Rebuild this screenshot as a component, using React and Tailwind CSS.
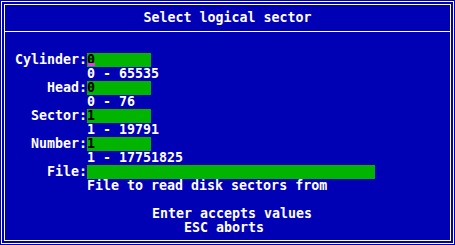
import React from "react";

const fields = [
  { label: "Cylinder:", value: "0", hint: "0 - 65535", width: "w-[64px]", cursor: true },
  { label: "Head:", value: "0", hint: "0 - 76", width: "w-[64px]" },
  { label: "Sector:", value: "1", hint: "1 - 19791", width: "w-[64px]" },
  { label: "Number:", value: "1", hint: "1 - 17751825", width: "w-[64px]" },
  { label: "File:", value: "", hint: "File to read disk sectors from", width: "w-[288px]" },
];

const Field = ({ label, value, hint, width, cursor }) => (
  <>
    <div className="flex h-[14px]">
      <div className="w-[82px] text-right">{label}</div>
      <div className={`${width} h-[14px] bg-[#00b400] text-black relative`}>
        {value}
        {cursor && <div className="absolute left-[1px] top-[10px] w-[7px] h-[3px] bg-[#e040e0]"></div>}
      </div>
    </div>
    <div className="flex h-[14px]">
      <div className="w-[82px]"></div>
      <div>{hint}</div>
    </div>
  </>
);

const App = () => {
  return (
    <div
      className="w-[455px] h-[245px] bg-[#0000b4] p-[1px] text-white font-bold text-[13.3px] leading-[14px] whitespace-pre"
      style={{ fontFamily: "'DejaVu Sans Mono', 'Liberation Mono', monospace" }}
    >
      <div className="h-full border border-white p-[2px]">
        <div className="h-full border border-white flex flex-col">
          {/* Title */}
          <div className="h-[27px] border-b border-white pt-[6px] text-center">Select logical sector</div>

          {/* Inputs */}
          <div className="pt-[21px] flex flex-col">
            {fields.map((f) => (
              <Field key={f.label} {...f} />
            ))}
          </div>

          {/* Footer */}
          <div className="pt-[14px] flex flex-col">
            <div className="h-[14px] pl-[147px]">Enter accepts values</div>
            <div className="h-[14px] pl-[179px]">ESC aborts</div>
          </div>
        </div>
      </div>
    </div>
  );
};

export default App;
